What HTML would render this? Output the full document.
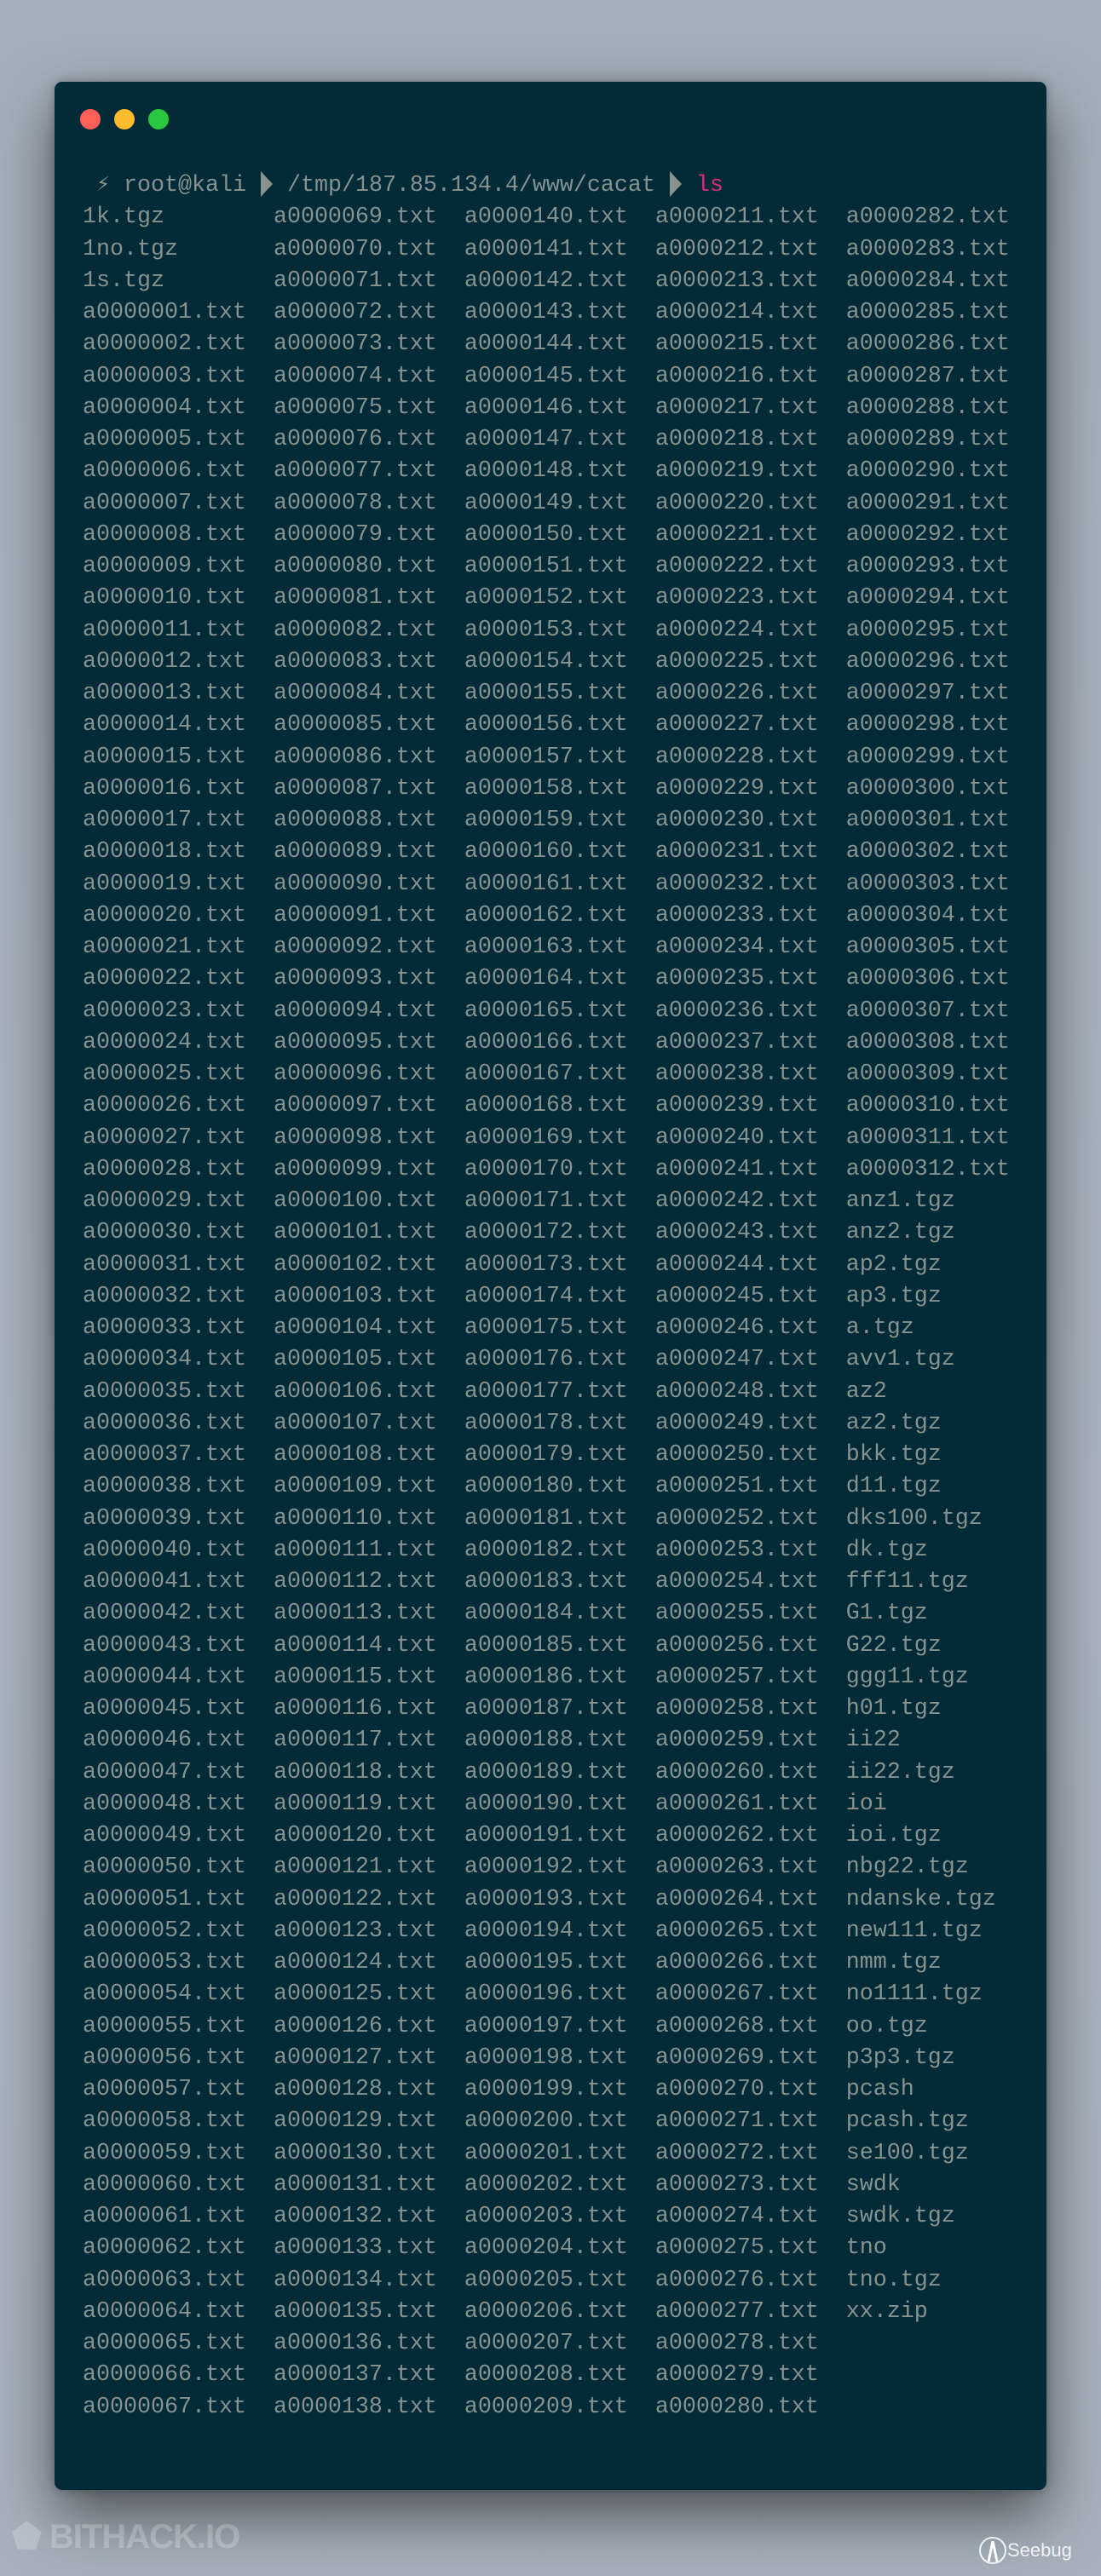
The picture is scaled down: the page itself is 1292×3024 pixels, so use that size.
<!DOCTYPE html>
<html><head><meta charset="utf-8"><style>
html,body{margin:0;padding:0}
body{width:1292px;height:3024px;background:linear-gradient(#a3afbb,#a9b4c0 60%,#a6b1bd);position:relative;overflow:hidden;font-family:"Liberation Mono","DejaVu Sans Mono",monospace}
.win{position:absolute;left:64px;top:96px;width:1164px;height:2827px;background:#022a37;border-radius:9px;box-shadow:0 30px 70px rgba(0,0,0,.55),0 0 12px rgba(0,0,0,.25)}
.dot{position:absolute;top:128px;width:24px;height:24px;border-radius:50%}
pre{position:absolute;left:97px;top:200px;margin:0;font-family:"Liberation Mono","DejaVu Sans Mono",monospace;font-size:26.67px;line-height:37.25px;color:#86938f;white-space:pre}
.c{display:inline-block;width:16px;text-align:center}
.ls{color:#d6307c}
.wm1{position:absolute;left:14px;top:2955px;font-family:"Liberation Sans",sans-serif;font-size:40px;font-weight:bold;color:rgba(255,255,255,.22);letter-spacing:-1px}
.wm2{position:absolute;left:1148px;top:2975px;font-family:"Liberation Sans",sans-serif;font-size:22px;color:rgba(255,255,255,.85)}
</style></head><body>
<div class="win"></div>
<div class="dot" style="left:94px;background:#fe5f57"></div>
<div class="dot" style="left:134px;background:#febc2e"></div>
<div class="dot" style="left:174px;background:#29c840"></div>
<pre> <span class="c">⚡</span> root@kali <span class="c"><svg width="16" height="30" style="vertical-align:-7px"><polygon points="1,0 15,15 1,30" fill="#86938f"/></svg></span> /tmp/187.85.134.4/www/cacat <span class="c"><svg width="16" height="30" style="vertical-align:-7px"><polygon points="1,0 15,15 1,30" fill="#86938f"/></svg></span> <span class="ls">ls</span>
1k.tgz        a0000069.txt  a0000140.txt  a0000211.txt  a0000282.txt
1no.tgz       a0000070.txt  a0000141.txt  a0000212.txt  a0000283.txt
1s.tgz        a0000071.txt  a0000142.txt  a0000213.txt  a0000284.txt
a0000001.txt  a0000072.txt  a0000143.txt  a0000214.txt  a0000285.txt
a0000002.txt  a0000073.txt  a0000144.txt  a0000215.txt  a0000286.txt
a0000003.txt  a0000074.txt  a0000145.txt  a0000216.txt  a0000287.txt
a0000004.txt  a0000075.txt  a0000146.txt  a0000217.txt  a0000288.txt
a0000005.txt  a0000076.txt  a0000147.txt  a0000218.txt  a0000289.txt
a0000006.txt  a0000077.txt  a0000148.txt  a0000219.txt  a0000290.txt
a0000007.txt  a0000078.txt  a0000149.txt  a0000220.txt  a0000291.txt
a0000008.txt  a0000079.txt  a0000150.txt  a0000221.txt  a0000292.txt
a0000009.txt  a0000080.txt  a0000151.txt  a0000222.txt  a0000293.txt
a0000010.txt  a0000081.txt  a0000152.txt  a0000223.txt  a0000294.txt
a0000011.txt  a0000082.txt  a0000153.txt  a0000224.txt  a0000295.txt
a0000012.txt  a0000083.txt  a0000154.txt  a0000225.txt  a0000296.txt
a0000013.txt  a0000084.txt  a0000155.txt  a0000226.txt  a0000297.txt
a0000014.txt  a0000085.txt  a0000156.txt  a0000227.txt  a0000298.txt
a0000015.txt  a0000086.txt  a0000157.txt  a0000228.txt  a0000299.txt
a0000016.txt  a0000087.txt  a0000158.txt  a0000229.txt  a0000300.txt
a0000017.txt  a0000088.txt  a0000159.txt  a0000230.txt  a0000301.txt
a0000018.txt  a0000089.txt  a0000160.txt  a0000231.txt  a0000302.txt
a0000019.txt  a0000090.txt  a0000161.txt  a0000232.txt  a0000303.txt
a0000020.txt  a0000091.txt  a0000162.txt  a0000233.txt  a0000304.txt
a0000021.txt  a0000092.txt  a0000163.txt  a0000234.txt  a0000305.txt
a0000022.txt  a0000093.txt  a0000164.txt  a0000235.txt  a0000306.txt
a0000023.txt  a0000094.txt  a0000165.txt  a0000236.txt  a0000307.txt
a0000024.txt  a0000095.txt  a0000166.txt  a0000237.txt  a0000308.txt
a0000025.txt  a0000096.txt  a0000167.txt  a0000238.txt  a0000309.txt
a0000026.txt  a0000097.txt  a0000168.txt  a0000239.txt  a0000310.txt
a0000027.txt  a0000098.txt  a0000169.txt  a0000240.txt  a0000311.txt
a0000028.txt  a0000099.txt  a0000170.txt  a0000241.txt  a0000312.txt
a0000029.txt  a0000100.txt  a0000171.txt  a0000242.txt  anz1.tgz
a0000030.txt  a0000101.txt  a0000172.txt  a0000243.txt  anz2.tgz
a0000031.txt  a0000102.txt  a0000173.txt  a0000244.txt  ap2.tgz
a0000032.txt  a0000103.txt  a0000174.txt  a0000245.txt  ap3.tgz
a0000033.txt  a0000104.txt  a0000175.txt  a0000246.txt  a.tgz
a0000034.txt  a0000105.txt  a0000176.txt  a0000247.txt  avv1.tgz
a0000035.txt  a0000106.txt  a0000177.txt  a0000248.txt  az2
a0000036.txt  a0000107.txt  a0000178.txt  a0000249.txt  az2.tgz
a0000037.txt  a0000108.txt  a0000179.txt  a0000250.txt  bkk.tgz
a0000038.txt  a0000109.txt  a0000180.txt  a0000251.txt  d11.tgz
a0000039.txt  a0000110.txt  a0000181.txt  a0000252.txt  dks100.tgz
a0000040.txt  a0000111.txt  a0000182.txt  a0000253.txt  dk.tgz
a0000041.txt  a0000112.txt  a0000183.txt  a0000254.txt  fff11.tgz
a0000042.txt  a0000113.txt  a0000184.txt  a0000255.txt  G1.tgz
a0000043.txt  a0000114.txt  a0000185.txt  a0000256.txt  G22.tgz
a0000044.txt  a0000115.txt  a0000186.txt  a0000257.txt  ggg11.tgz
a0000045.txt  a0000116.txt  a0000187.txt  a0000258.txt  h01.tgz
a0000046.txt  a0000117.txt  a0000188.txt  a0000259.txt  ii22
a0000047.txt  a0000118.txt  a0000189.txt  a0000260.txt  ii22.tgz
a0000048.txt  a0000119.txt  a0000190.txt  a0000261.txt  ioi
a0000049.txt  a0000120.txt  a0000191.txt  a0000262.txt  ioi.tgz
a0000050.txt  a0000121.txt  a0000192.txt  a0000263.txt  nbg22.tgz
a0000051.txt  a0000122.txt  a0000193.txt  a0000264.txt  ndanske.tgz
a0000052.txt  a0000123.txt  a0000194.txt  a0000265.txt  new111.tgz
a0000053.txt  a0000124.txt  a0000195.txt  a0000266.txt  nmm.tgz
a0000054.txt  a0000125.txt  a0000196.txt  a0000267.txt  no1111.tgz
a0000055.txt  a0000126.txt  a0000197.txt  a0000268.txt  oo.tgz
a0000056.txt  a0000127.txt  a0000198.txt  a0000269.txt  p3p3.tgz
a0000057.txt  a0000128.txt  a0000199.txt  a0000270.txt  pcash
a0000058.txt  a0000129.txt  a0000200.txt  a0000271.txt  pcash.tgz
a0000059.txt  a0000130.txt  a0000201.txt  a0000272.txt  se100.tgz
a0000060.txt  a0000131.txt  a0000202.txt  a0000273.txt  swdk
a0000061.txt  a0000132.txt  a0000203.txt  a0000274.txt  swdk.tgz
a0000062.txt  a0000133.txt  a0000204.txt  a0000275.txt  tno
a0000063.txt  a0000134.txt  a0000205.txt  a0000276.txt  tno.tgz
a0000064.txt  a0000135.txt  a0000206.txt  a0000277.txt  xx.zip
a0000065.txt  a0000136.txt  a0000207.txt  a0000278.txt
a0000066.txt  a0000137.txt  a0000208.txt  a0000279.txt
a0000067.txt  a0000138.txt  a0000209.txt  a0000280.txt</pre>
<div class="wm1">&#x2B1F; BITHACK.IO</div>
<div class="wm2"><svg width="34" height="38" style="vertical-align:-12px"><circle cx="17" cy="19" r="15" fill="none" stroke="rgba(255,255,255,.85)" stroke-width="2"/><path d="M17 8 L12 32 M17 8 L22 32" stroke="#fff" stroke-width="3"/></svg>Seebug</div>
</body></html>
